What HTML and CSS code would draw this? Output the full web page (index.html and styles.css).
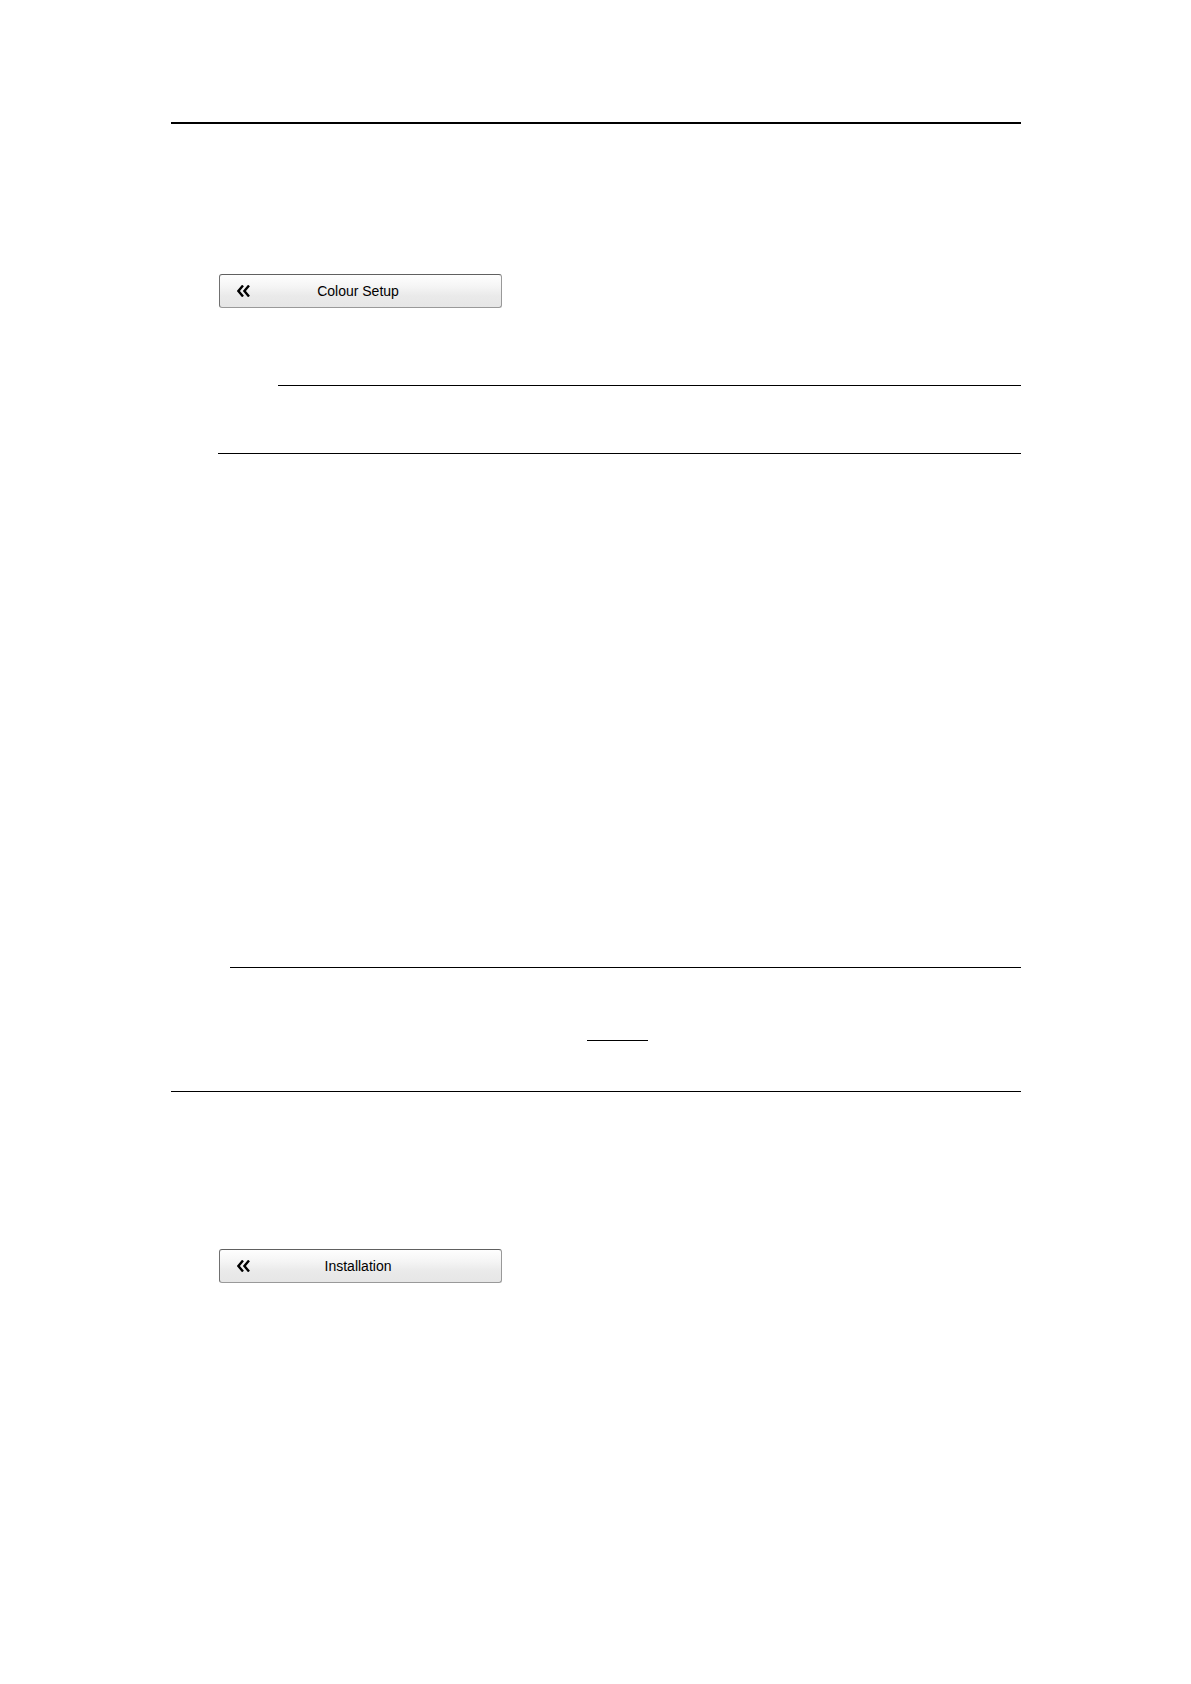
FILE: index.html
```html
<!DOCTYPE html>
<html lang="en">
<head>
<meta charset="utf-8">
<meta name="viewport" content="width=device-width, initial-scale=1">
<title>Colour Setup and Installation</title>
<link rel="stylesheet" href="styles.css">
</head>
<body>
<main class="page">
  <hr class="rule rule-heavy">
  <section class="topic topic-colour">
    <button class="menu-button" type="button">
      <svg class="chevrons" viewBox="0 0 13 12" aria-hidden="true"><path d="M6 0.5L1.4 6L6 11.5M12 0.5L7.4 6L12 11.5"/></svg>
      <span class="menu-label">Colour Setup</span>
    </button>
    <div class="note">
      <hr class="rule note-start">
      <hr class="rule">
    </div>
  </section>
  <section class="details">
    <hr class="rule details-start">
    <hr class="rule link-rule">
    <hr class="rule">
  </section>
  <section class="topic topic-install">
    <button class="menu-button" type="button">
      <svg class="chevrons" viewBox="0 0 13 12" aria-hidden="true"><path d="M6 0.5L1.4 6L6 11.5M12 0.5L7.4 6L12 11.5"/></svg>
      <span class="menu-label">Installation</span>
    </button>
  </section>
</main>
</body>
</html>
```
FILE: styles.css
```css
* {
  box-sizing: border-box;
}

body {
  margin: 0;
  background: #fff;
  color: #000;
  font-family: "Liberation Sans", Arial, sans-serif;
}

.page {
  padding: 122px 170px 400px 171px;
}

.rule {
  height: 1px;
  margin: 0;
  border: 0;
  background: #000;
}

.rule-heavy {
  height: 2px;
}

.topic {
  padding-left: 48px;
}

.topic-colour {
  padding-top: 150px;
}

.topic-install {
  padding-top: 157px;
}

.menu-button {
  display: grid;
  grid-template-columns: 13px 1fr 13px;
  align-items: center;
  width: 283px;
  height: 34px;
  padding: 0 22px 0 17px;
  border: 1px solid #999;
  border-top-color: #606060;
  border-left-color: #707070;
  border-radius: 3px;
  background: linear-gradient(#fefefe 0%, #f5f5f5 35%, #eaeaea 65%, #e6e6e6 100%);
  color: #000;
  font: 14px/20px "Liberation Sans", Arial, sans-serif;
}

.chevrons {
  display: block;
  width: 13px;
  height: 12px;
  fill: none;
  stroke: #000;
  stroke-width: 2.4;
}

.menu-label {
  text-align: center;
}

.note {
  display: grid;
  gap: 67px;
  margin-left: -1px;
  padding-top: 77px;
}

.note-start {
  margin-left: 60px;
}

.details {
  padding-top: 513px;
}

.details-start {
  margin-left: 59px;
}

.link-rule {
  width: 61px;
  margin: 72px 0 50px 416px;
}
```
